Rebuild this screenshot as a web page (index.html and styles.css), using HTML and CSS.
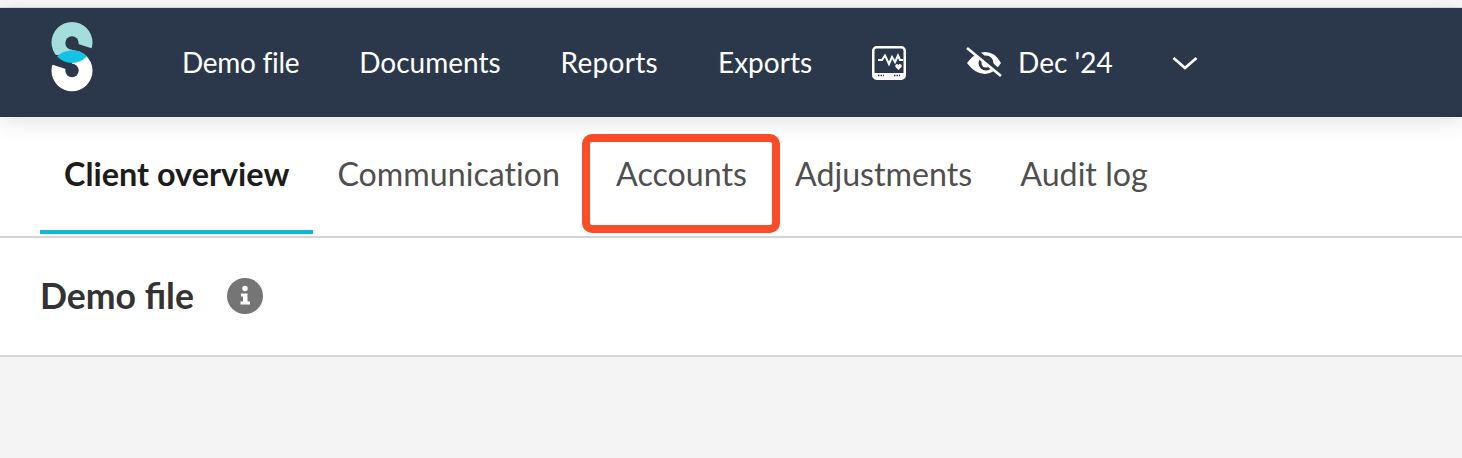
FILE: index.html
```html
<!DOCTYPE html>
<html lang="en">
<head>
<meta charset="utf-8">
<title>Demo file</title>
<link rel="stylesheet" href="styles.css">
</head>
<body>
<div class="top-strip"></div>
<header class="navbar">
  <svg class="logo" viewBox="0 0 42 70" width="42" height="70" aria-hidden="true">
    <circle cx="21" cy="20.500" r="20.500" fill="#a4dedc"/>
    <path d="M21 20 L42.500 27 V36 H21 Z" fill="#2b384b"/>
    <circle cx="21" cy="48.700" r="20.500" fill="#ffffff"/>
    <path d="M21 49 L-0.500 42 V33 H21 Z" fill="#2b384b"/>
    <path d="M6.100 34.600 A20.500 20.500 0 0 1 35.900 34.600 A20.500 20.500 0 0 1 6.100 34.600 Z" fill="#12c3e2"/>
    <circle cx="21" cy="21" r="6.700" fill="#2b384b"/>
    <circle cx="21" cy="48.500" r="6.700" fill="#2b384b"/>
  </svg>
  <nav class="nav-links">
    <a class="nav-link nav-link-tight">Demo file</a>
    <a class="nav-link">Documents</a>
    <a class="nav-link nav-link-wide">Reports</a>
    <a class="nav-link">Exports</a>
    <svg class="monitor" viewBox="0 0 34 34" width="34" height="34" aria-hidden="true">
      <rect x="1.250" y="1.250" width="31.500" height="31.500" rx="3.500" fill="none" stroke="#fff" stroke-width="2.500"/>
      <path d="M2 27 H32 V29 Q32 32 29 32 H5 Q2 32 2 29 Z" fill="#fff"/>
      <path d="M6 14 H10 L13 9.500 L17 18 L20 11 L23 16 L26 9.500 L28 14 H31" fill="none" stroke="#fff" stroke-width="2"/>
      <path d="M26.500 24 l-3 -3 a1.700 1.700 0 0 1 3 -2 a1.700 1.700 0 0 1 3 2 Z" fill="#fff"/>
      <path d="M6 29.500 H12 M22 29.500 H28" stroke="#2b384b" stroke-width="1.500" stroke-dasharray="1.500 1"/>
    </svg>
    <span class="period">
      <svg class="eye" viewBox="0 0 36 30" width="36" height="30" aria-hidden="true">
        <path d="M1 16 Q9 5 19 5 Q29 5 35 16 Q28 27 19 27 Q9 27 1 16 Z" fill="#fff"/>
        <circle cx="20" cy="16" r="7.500" fill="#2b384b"/>
        <circle cx="20" cy="16" r="4.500" fill="#fff"/>
        <path d="M3 -1 L35 27" stroke="#2b384b" stroke-width="6"/>
        <path d="M1 1 L35 29" stroke="#fff" stroke-width="2.600"/>
      </svg>
      <span class="nav-link">Dec '24</span>
    </span>
    <svg class="chevron" viewBox="0 0 26 16" width="26" height="16" aria-hidden="true">
      <path d="M1.500 3 L13 13 L24.500 3" fill="none" stroke="#fff" stroke-width="2.800"/>
    </svg>
  </nav>
</header>
<div class="tabs">
  <a class="tab tab-active">Client overview</a>
  <a class="tab">Communication</a>
  <a class="tab tab-marked">Accounts<span class="marker"></span></a>
  <a class="tab">Adjustments</a>
  <a class="tab">Audit log</a>
</div>
<section class="title-row">
  <h1 class="title">Demo file</h1>
  <svg class="info" viewBox="0 0 36 36" width="36" height="36" aria-hidden="true">
    <circle cx="18" cy="18" r="18" fill="#757575"/>
    <circle cx="18" cy="10.500" r="2.700" fill="#fff"/>
    <path d="M14 15.500 H20.500 V23.500 H23 V26.500 H13.500 V23.500 H16 V18.500 H14 Z" fill="#fff"/>
  </svg>
</section>
<main class="content"></main>
</body>
</html>
```

FILE: styles.css
```css
* {
  box-sizing: border-box;
}

html,
body {
  margin: 0;
  height: 100%;
}

body {
  display: flex;
  flex-direction: column;
  background: #f4f4f4;
  font-family: Lato, "Open Sans", sans-serif;
  overflow: hidden;
}

.top-strip {
  height: 8px;
  background: #f8f8fb;
  border-bottom: 1px solid #dcdce2;
}

.navbar {
  position: relative;
  z-index: 1;
  display: flex;
  align-items: center;
  height: 109px;
  padding-left: 51px;
  background: #2b384b;
  box-shadow: 0 4px 22px rgba(0, 0, 0, 0.12);
}

.logo {
  flex: none;
  margin-top: -11px;
}

.nav-links {
  display: flex;
  align-items: center;
  margin-left: 89px;
  margin-top: -1px;
}

.nav-link {
  color: #fff;
  font-size: 28px;
  line-height: 34px;
  white-space: nowrap;
}

.nav-links > .nav-link {
  margin-right: 60px;
}

.nav-links > .nav-link-tight {
  letter-spacing: -0.3px;
}

.nav-links > .nav-link-wide {
  letter-spacing: 0.3px;
}

.monitor {
  flex: none;
  margin-right: 60px;
  margin-top: 2px;
}

.period {
  display: flex;
  align-items: center;
  gap: 16px;
  margin-right: 59px;
}

.eye {
  flex: none;
}

.chevron {
  flex: none;
  margin-top: 1px;
}

.tabs {
  display: flex;
  height: 121px;
  padding-left: 40px;
  background: #fff;
  border-bottom: 2px solid #d4d4d4;
}

.tab {
  position: relative;
  height: 117px;
  padding: 38px 24px 0;
  color: #4f4f4f;
  font-size: 32.200px;
  line-height: 38px;
  font-variant-ligatures: none;
  white-space: nowrap;
}

.tab-active {
  color: #1c1c1c;
  font-size: 32.400px;
  font-weight: 700;
  border-bottom: 4px solid #12b6d6;
}

.tab-marked {
  margin-left: 8px;
}

.marker {
  position: absolute;
  top: 17px;
  left: -10px;
  right: -9px;
  bottom: 1px;
  border: 8px solid #f84d27;
  border-radius: 10px;
}

.title-row {
  display: flex;
  align-items: center;
  gap: 33px;
  height: 119px;
  padding-left: 40px;
  padding-bottom: 2px;
  background: #fff;
  border-bottom: 2px solid #d6d6d6;
}

.title {
  margin: 0;
  color: #333;
  font-size: 35.600px;
  line-height: 40px;
  font-weight: 700;
}

.info {
  flex: none;
}

.content {
  flex: 1;
  background: #f4f4f4;
}
```
